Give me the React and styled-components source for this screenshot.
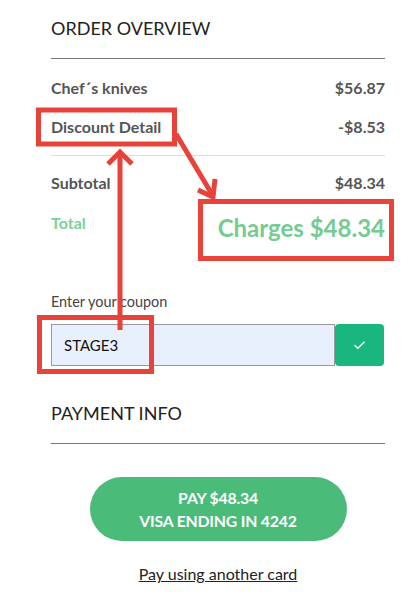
import React from 'react';
import styled, { createGlobalStyle } from 'styled-components';

const GlobalStyle = createGlobalStyle`
  body {
    margin: 0;
    background: #fff;
    font-family: Lato, 'Open Sans', sans-serif;
  }
`;

const App = () => {
  return (
    <Page>
      <GlobalStyle />
      <Checkout>
        <SectionTitle>ORDER OVERVIEW</SectionTitle>
        <ItemList>
          <Row>
            <span>Chef´s knives</span>
            <span>$56.87</span>
          </Row>
          <Row>
            <span>Discount Detail</span>
            <span>-$8.53</span>
          </Row>
        </ItemList>
        <Totals>
          <Row>
            <span>Subtotal</span>
            <span>$48.34</span>
          </Row>
          <TotalRow>
            <TotalLabel>Total</TotalLabel>
            <Charges>Charges $48.34</Charges>
          </TotalRow>
        </Totals>

        <CouponLabel>Enter your coupon</CouponLabel>
        <CouponRow>
          <CouponInput defaultValue='STAGE3' />
          <ApplyButton aria-label='apply'>
            <svg width='13' height='10' viewBox='0 0 13 10'>
              <path d='M1.5 5.2 L4.8 8.3 L11.5 1.7' fill='none' stroke='#fff' strokeWidth='1.5' />
            </svg>
          </ApplyButton>
        </CouponRow>

        <SectionTitle className='payment'>PAYMENT INFO</SectionTitle>
        <PayButton>
          PAY $48.34
          <br />
          VISA ENDING IN 4242
        </PayButton>
        <OtherCard href='#'>Pay using another card</OtherCard>
      </Checkout>

      {/* hand-drawn annotations on top of the screenshot */}
      <Annotations viewBox='0 0 418 603'>
        <g fill='none' stroke='#e8433a' strokeWidth='5' strokeLinejoin='miter'>
          <rect x='38.5' y='110' width='136' height='34' />
          <rect x='200.5' y='201.5' width='191' height='57' />
          <rect x='39.5' y='317.5' width='112' height='54' />
          <line x1='120' y1='153' x2='120' y2='330' />
          <polyline points='108,164 120,152 132,164' />
          <line x1='176' y1='134' x2='213' y2='196' />
          <polyline points='198,190 213,197 215,179' />
        </g>
      </Annotations>
    </Page>
  );
};

// Styled Components
const Page = styled.div`
  position: relative;
  width: 418px;
  height: 603px;
  overflow: hidden;
`;

const Checkout = styled.div`
  width: 334px;
  margin-left: 51px;
  display: flex;
  flex-direction: column;
`;

const SectionTitle = styled.h2`
  margin: 0;
  padding: 16px 0 18px;
  font-size: 18px;
  line-height: 24px;
  font-weight: 400;
  color: #222;
  border-bottom: 1px solid #7a7a7a;
  &.payment {
    margin-top: 35px;
    padding-top: 0;
  }
`;

const ItemList = styled.div`
  display: flex;
  flex-direction: column;
  gap: 19px;
  padding: 19px 0 18px;
  border-bottom: 1px solid #ddd;
`;

const Totals = styled.div`
  display: flex;
  flex-direction: column;
  padding-top: 17px;
`;

const Row = styled.div`
  display: flex;
  justify-content: space-between;
  font-size: 16px;
  line-height: 20px;
  font-weight: 700;
  color: #555;
`;

const TotalRow = styled.div`
  display: flex;
  justify-content: space-between;
  align-items: flex-start;
  margin-top: 20px;
`;

const TotalLabel = styled.span`
  font-size: 16px;
  line-height: 20px;
  font-weight: 700;
  color: #7ccf9a;
`;

const Charges = styled.span`
  font-size: 24px;
  line-height: 30px;
  font-weight: 700;
  color: #75cb92;
`;

const CouponLabel = styled.label`
  margin-top: 50px;
  font-size: 14.4px;
  line-height: 18px;
  color: #444;
`;

const CouponRow = styled.div`
  display: flex;
  margin-top: 13px;
  height: 42px;
`;

const CouponInput = styled.input`
  box-sizing: border-box;
  width: 284px;
  height: 42px;
  padding: 0 12px;
  border: 1px solid #999;
  background: #e8f0fe;
  font-family: Lato, sans-serif;
  font-size: 15px;
  color: #111;
  outline: none;
`;

const ApplyButton = styled.button`
  width: 49px;
  height: 42px;
  border: none;
  border-radius: 4px;
  background: #19b67f;
  display: flex;
  align-items: center;
  justify-content: center;
  padding: 0;
`;

const PayButton = styled.button`
  align-self: center;
  width: 257px;
  height: 64px;
  margin-top: 33px;
  border: none;
  border-radius: 32px;
  background: #4bbb7a;
  color: #fff;
  font-family: Lato, sans-serif;
  font-size: 15.8px;
  font-weight: 700;
  line-height: 23px;
  letter-spacing: -0.2px;
`;

const OtherCard = styled.a`
  align-self: center;
  margin-top: 23px;
  font-size: 16px;
  line-height: 20px;
  color: #222;
  text-decoration: underline;
`;

const Annotations = styled.svg`
  position: absolute;
  left: 0;
  top: 0;
  width: 418px;
  height: 603px;
  pointer-events: none;
`;

export default App;
